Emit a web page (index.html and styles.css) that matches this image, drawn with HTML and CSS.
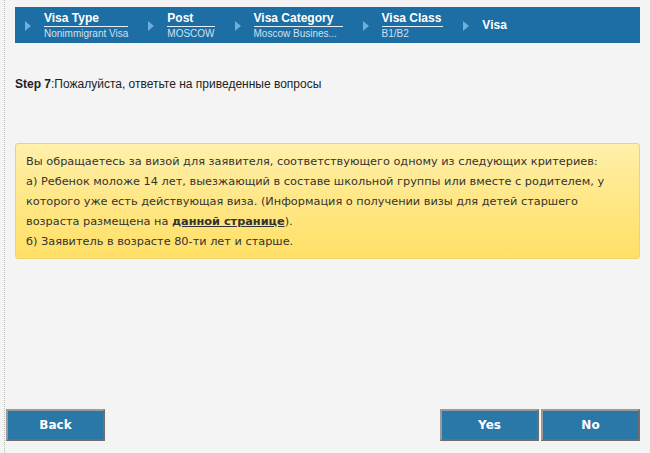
FILE: index.html
```html
<!DOCTYPE html>
<html lang="ru">
<head>
  <meta charset="UTF-8" />
  <title>Visa</title>
  <link rel="stylesheet" href="styles.css">
</head>
<body>
  <div class="page">
    <nav class="steps">
      <div class="step">
        <span class="arrow"></span>
        <div class="step-text">
          <div class="step-title">Visa Type</div>
          <div class="step-value">Nonimmigrant Visa</div>
        </div>
      </div>
      <div class="step">
        <span class="arrow"></span>
        <div class="step-text">
          <div class="step-title">Post</div>
          <div class="step-value">MOSCOW</div>
        </div>
      </div>
      <div class="step">
        <span class="arrow"></span>
        <div class="step-text wide">
          <div class="step-title">Visa Category</div>
          <div class="step-value">Moscow Busines...</div>
        </div>
      </div>
      <div class="step">
        <span class="arrow"></span>
        <div class="step-text">
          <div class="step-title">Visa Class</div>
          <div class="step-value">B1/B2</div>
        </div>
      </div>
      <div class="step current">
        <span class="arrow"></span>
        <div class="step-title">Visa</div>
      </div>
    </nav>

    <p class="question"><b>Step 7</b>:Пожалуйста, ответьте на приведенные вопросы</p>

    <div class="notice">
      Вы обращаетесь за визой для заявителя, соответствующего одному из следующих критериев:<br>
      а) Ребенок моложе 14 лет, выезжающий в составе школьной группы или вместе с родителем, у которого уже есть действующая виза. (Информация о получении визы для детей старшего возраста размещена на <a href="#">данной странице</a>).<br>
      б) Заявитель в возрасте 80-ти лет и старше.
    </div>

    <div class="actions">
      <button class="btn">Back</button>
      <div class="answers">
        <button class="btn">Yes</button>
        <button class="btn">No</button>
      </div>
    </div>
  </div>
</body>
</html>
```

FILE: styles.css
```css
html, body {
  height: 100%;
}
body {
  margin: 0;
  background: #f4f4f4;
  font-family: "Liberation Sans", Arial, sans-serif;
  color: #222;
}
.page {
  position: relative;
  height: 453px;
  box-sizing: border-box;
  margin-left: 4px;
  border-left: 1px dotted #bbb;
  padding: 7px 10px 0 10px;
}
.steps {
  display: flex;
  height: 36px;
  background: #1c6ea4;
  padding-left: 10px;
}
.step {
  display: flex;
  align-items: center;
  margin-right: 20px;
}
.arrow {
  width: 0;
  height: 0;
  border-top: 5px solid transparent;
  border-bottom: 5px solid transparent;
  border-left: 6px solid #6eaedc;
  margin-right: 13px;
  margin-top: 2px;
}
.step-text {
  padding-top: 2px;
}
.step-text.wide {
  min-width: 89px;
}
.step-title {
  color: #fff;
  font-weight: bold;
  font-size: 12px;
  line-height: 15px;
  padding-right: 2px;
  border-bottom: 1px solid #e6eff6;
}
.current .step-title {
  border-bottom: none;
}
.step-value {
  color: #cfe0ee;
  font-size: 10px;
  line-height: 14px;
}
.question {
  margin: 34px 0 0 0;
  font-size: 12px;
  color: #222;
}
.notice {
  margin-top: 52px;
  padding: 8px 10px 6px 10px;
  border: 1px solid #f2d36a;
  border-radius: 3px;
  background: linear-gradient(to bottom, #fff0ab 0%, #ffe88a 45%, #ffe066 100%);
  font-family: "DejaVu Sans", Verdana, sans-serif;
  font-size: 11.3px;
  line-height: 20px;
  color: #333;
}
.notice a {
  color: #333;
  font-weight: bold;
}
.actions {
  position: absolute;
  left: 1px;
  right: 10px;
  top: 409px;
  display: flex;
  justify-content: space-between;
}
.answers {
  display: flex;
  gap: 2px;
}
.btn {
  width: 99px;
  height: 32px;
  background: #2a78a8;
  border: 2px solid;
  border-color: #9a9a9a #6e6e6e #6e6e6e #9a9a9a;
  color: #fff;
  font-family: "DejaVu Sans", Verdana, sans-serif;
  font-weight: bold;
  font-size: 12px;
  padding: 0;
}
```
